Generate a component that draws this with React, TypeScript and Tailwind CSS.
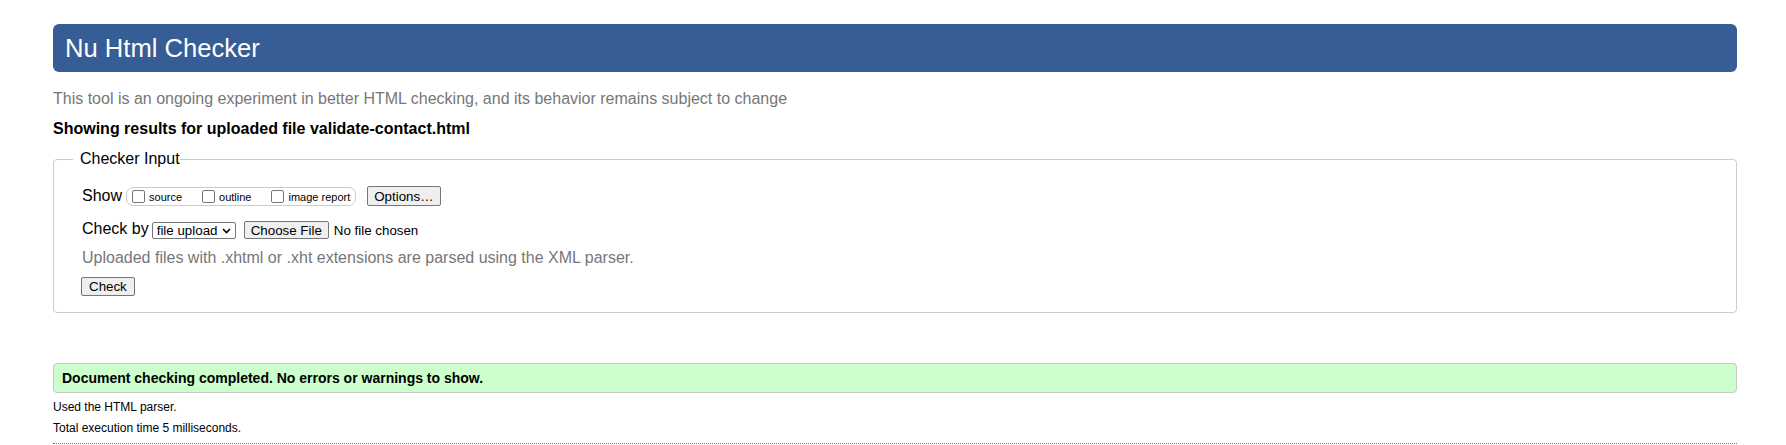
import React from "react";

function Checkbox({ label }: { label: string }) {
  return (
    <label className="flex items-center">
      <input
        type="checkbox"
        className="appearance-none w-[13px] h-[13px] border border-[#767676] rounded-[2px] bg-white ml-0 mr-[4px]"
      />
      <span className="text-[11px] leading-[13px] mt-[2px]">{label}</span>
    </label>
  );
}

function Btn({ children, className = "" }: { children: React.ReactNode; className?: string }) {
  return (
    <button
      type="button"
      className={
        "bg-[#efefef] border border-[#767676] rounded-[2px] px-[6px] text-[13.33px] leading-[15px] text-black " +
        className
      }
    >
      {children}
    </button>
  );
}

export default function App() {
  return (
    <div className="min-h-screen bg-white pl-[53px] pr-[49px] pt-[24px] font-['Liberation_Sans',Arial,sans-serif] text-black">
      <h1 className="h-[48px] bg-[#365d95] rounded-[6px] text-white text-[25.6px] font-normal pl-[12px] flex items-center">
        Nu Html Checker
      </h1>
      <p className="mt-[18px] text-[16px] leading-[18px] text-[#777]">
        This tool is an ongoing experiment in better HTML checking, and its behavior remains subject to change
      </p>
      <p className="mt-[12px] text-[16px] leading-[18px] font-bold">
        Showing results for uploaded file validate-contact.html
      </p>

      <fieldset className="mt-[12px] border border-[#ccc] rounded-[4px] px-[19px] pb-[16px]">
        <legend className="pl-[7px] text-[16px] leading-[18px]">Checker Input</legend>
        <div className="pl-[9px] pt-[18px]">
          <div className="flex items-center h-[20px]">
            <span className="text-[16px] leading-[18px] mr-[4px]">Show</span>
            <div className="flex items-center h-[19px] border border-[#ccc] rounded-[7px] pl-[5px] pr-[5px] gap-[20px]">
              <Checkbox label="source" />
              <Checkbox label="outline" />
              <Checkbox label="image report" />
            </div>
            <Btn className="ml-[11px] h-[20px]">Options…</Btn>
          </div>

          <div className="flex items-center h-[18px] mt-[15px]">
            <span className="text-[16px] leading-[18px] mr-[3px] -mt-[2px]">Check by</span>
            <div className="relative flex items-center w-[84px] h-[17px] border border-[#767676] rounded-[2px] bg-white">
              <select
                defaultValue="file"
                className="appearance-none block w-full h-[15px] py-0 pl-[4px] bg-transparent text-[13.33px] leading-[15px] text-black outline-none"
              >
                <option value="file">file upload</option>
                <option value="address">address</option>
                <option value="text">text input</option>
              </select>
              <svg
                className="pointer-events-none absolute right-[4px] top-[5px]"
                width="9"
                height="6"
                viewBox="0 0 9 6"
              >
                <path d="M1 1l3.5 3.5L8 1" fill="none" stroke="#000" strokeWidth="1.6" />
              </svg>
            </div>
            <Btn className="ml-[8px] h-[18px]">Choose File</Btn>
            <span className="ml-[5px] text-[13.33px] leading-[15px]">No file chosen</span>
          </div>

          <p className="mt-[10px] text-[16px] leading-[18px] text-[#777]">
            Uploaded files with .xhtml or .xht extensions are parsed using the XML parser.
          </p>

          <div className="mt-[10px] flex">
            <Btn className="-ml-[1px] h-[19px] px-[7px]">Check</Btn>
          </div>
        </div>
      </fieldset>

      <div className="mt-[50px] border border-[#c8c8c8] rounded-[4px] bg-[#ccffcc] px-[8px] py-[6px] text-[14px] leading-[16px] font-bold">
        Document checking completed. No errors or warnings to show.
      </div>
      <p className="mt-[7px] text-[12px] leading-[14px]">Used the HTML parser.</p>
      <p className="mt-[7px] text-[12px] leading-[14px]">Total execution time 5 milliseconds.</p>
      <div className="mt-[8px] border-t border-dotted border-[#777]" />
    </div>
  );
}
